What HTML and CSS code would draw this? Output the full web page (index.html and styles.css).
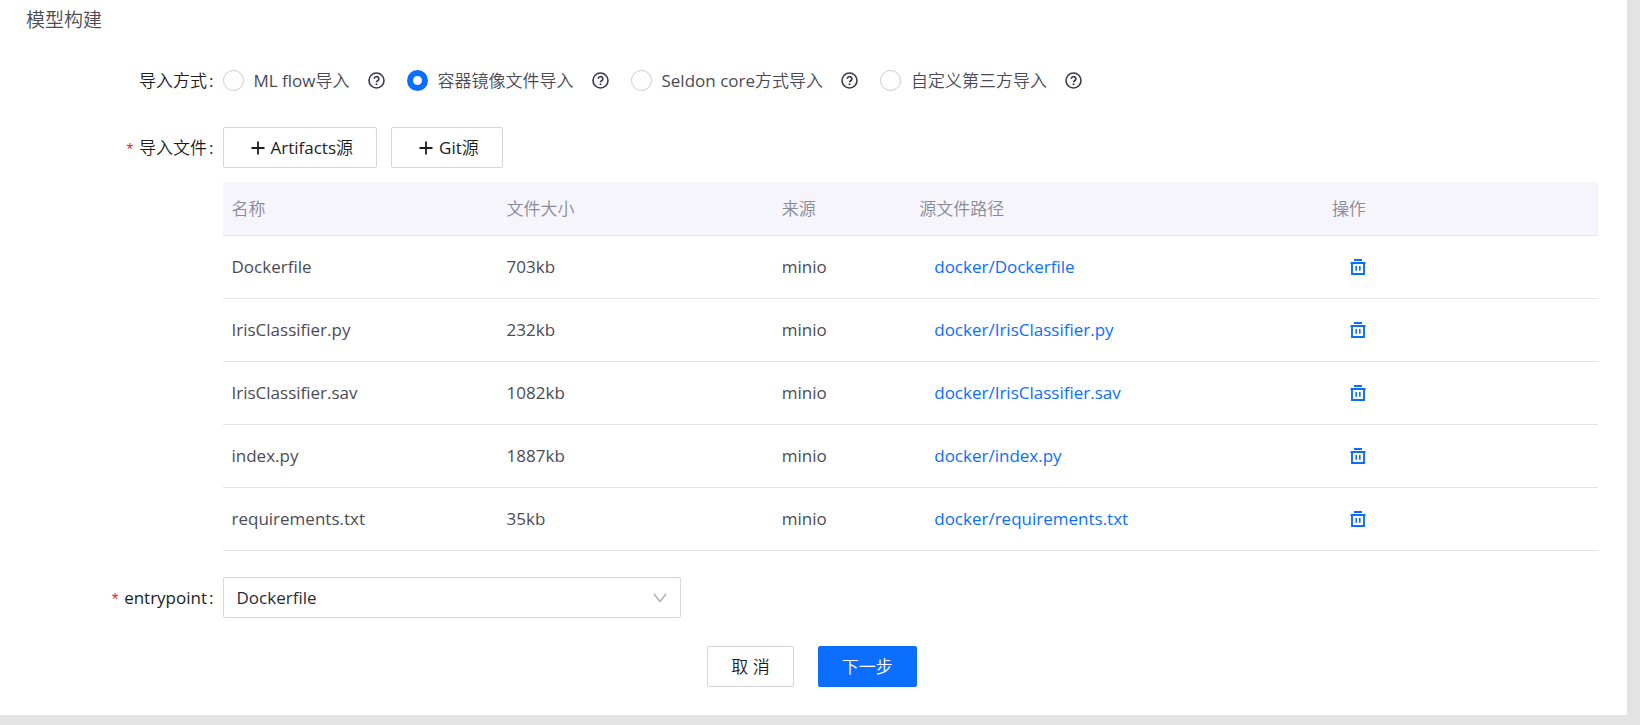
FILE: index.html
```html
<!DOCTYPE html>
<html lang="zh-CN">
<head>
<meta charset="utf-8">
<title>模型构建</title>
<link rel="stylesheet" href="styles.css">
</head>
<body>
<svg class="sprite" aria-hidden="true">
  <symbol id="help" viewBox="0 0 17 17"><circle cx="8.5" cy="8.5" r="7.5" fill="none" stroke="currentColor" stroke-width="1.6"/><path d="M6.2 6.9a2.3 2.2 0 1 1 3.5 1.8c-.8.5-1.2.9-1.2 1.6" fill="none" stroke="currentColor" stroke-width="1.6"/><circle cx="8.5" cy="12.2" r="1" fill="currentColor"/></symbol>
  <symbol id="plus" viewBox="0 0 14 14"><path d="M7 .5v13M.5 7h13" stroke="currentColor" stroke-width="1.8"/></symbol>
  <symbol id="trash" viewBox="0 0 16 16"><path d="M4 1h8M.5 4h15" stroke="currentColor" stroke-width="1.8"/><path d="M2 4v11h12V4" fill="none" stroke="currentColor" stroke-width="1.9"/><path d="M6.2 7v4.8M9.8 7v4.8" stroke="currentColor" stroke-width="1.6"/></symbol>
</svg>
<main class="card">
  <h1 class="title">模型构建</h1>
  <form class="form">
    <div class="item item-mode" role="radiogroup" aria-labelledby="mode-label">
      <span class="label" id="mode-label">导入方式<span class="colon">:</span></span>
      <div class="control modes">
        <div class="mode"><label class="choice"><input class="radio" type="radio" name="mode"><span><span class="latin">ML flow</span>导入</span></label><svg class="help"><use href="#help"/></svg></div>
        <div class="mode"><label class="choice"><input class="radio" type="radio" name="mode" checked>容器镜像文件导入</label><svg class="help"><use href="#help"/></svg></div>
        <div class="mode"><label class="choice"><input class="radio" type="radio" name="mode"><span><span class="latin">Seldon core</span>方式导入</span></label><svg class="help"><use href="#help"/></svg></div>
        <div class="mode"><label class="choice"><input class="radio" type="radio" name="mode">自定义第三方导入</label><svg class="help"><use href="#help"/></svg></div>
      </div>
    </div>
    <div class="item item-files">
      <span class="label"><span class="required">*</span>导入文件<span class="colon">:</span></span>
      <div class="control">
        <div class="sources">
          <button class="btn btn-source" type="button"><svg class="plus"><use href="#plus"/></svg><span><span class="latin">Artifacts</span>源</span></button>
          <button class="btn btn-source" type="button"><svg class="plus"><use href="#plus"/></svg><span><span class="latin">Git</span>源</span></button>
        </div>
        <table class="table">
          <colgroup><col class="col-name"><col class="col-size"><col class="col-origin"><col class="col-path"><col class="col-action"></colgroup>
          <thead><tr><th>名称</th><th>文件大小</th><th>来源</th><th>源文件路径</th><th>操作</th></tr></thead>
          <tbody>
            <tr><td>Dockerfile</td><td>703kb</td><td>minio</td><td><a class="link" href="#">docker/Dockerfile</a></td><td><button class="delete" type="button" aria-label="删除"><svg class="trash"><use href="#trash"/></svg></button></td></tr>
            <tr><td>IrisClassifier.py</td><td>232kb</td><td>minio</td><td><a class="link" href="#">docker/IrisClassifier.py</a></td><td><button class="delete" type="button" aria-label="删除"><svg class="trash"><use href="#trash"/></svg></button></td></tr>
            <tr><td>IrisClassifier.sav</td><td>1082kb</td><td>minio</td><td><a class="link" href="#">docker/IrisClassifier.sav</a></td><td><button class="delete" type="button" aria-label="删除"><svg class="trash"><use href="#trash"/></svg></button></td></tr>
            <tr><td>index.py</td><td>1887kb</td><td>minio</td><td><a class="link" href="#">docker/index.py</a></td><td><button class="delete" type="button" aria-label="删除"><svg class="trash"><use href="#trash"/></svg></button></td></tr>
            <tr><td>requirements.txt</td><td>35kb</td><td>minio</td><td><a class="link" href="#">docker/requirements.txt</a></td><td><button class="delete" type="button" aria-label="删除"><svg class="trash"><use href="#trash"/></svg></button></td></tr>
          </tbody>
        </table>
      </div>
    </div>
    <div class="item item-entry">
      <label class="label" for="entrypoint"><span class="required">*</span><span class="latin">entrypoint</span><span class="colon">:</span></label>
      <div class="control">
        <div class="select-wrap">
          <select class="select" id="entrypoint"><option>Dockerfile</option><option>index.py</option></select>
          <svg class="chevron" viewBox="0 0 14 10"><path d="M1 1l6 7.5L13 1" fill="none" stroke="currentColor" stroke-width="1.4"/></svg>
        </div>
      </div>
    </div>
    <div class="actions">
      <button class="btn" type="button">取 消</button>
      <button class="btn btn-primary" type="submit">下一步</button>
    </div>
  </form>
</main>
</body>
</html>
```

FILE: styles.css
```css
* { box-sizing: border-box; }

body {
  margin: 0;
  padding: 0 13px 10px 0;
  background: #e3e3e3;
  color: #4b4b55;
  font: 350 17px/26px "Open Sans", "Noto Sans CJK SC", sans-serif;
}

button, select { font: inherit; }

.sprite { display: none; }

.latin { font-weight: 400; }

.card {
  padding: 6px 29px 28px 26px;
  background: #fff;
}

.title {
  margin: 0;
  font-size: 19px;
  font-weight: 350;
  line-height: 28px;
}

.form { padding-top: 26px; }

.item { display: flex; }

.label {
  display: flex;
  flex: 0 0 12.5%;
  align-items: center;
  justify-content: flex-end;
  height: 41px;
  padding-right: 9px;
  color: #1c1c22;
}

.colon {
  margin-left: 2px;
  font-weight: 400;
}

.required {
  margin-right: 4px;
  padding-top: 6px;
  color: #f5222d;
  font-family: "Liberation Mono", monospace;
  font-weight: 400;
}

.control {
  flex: 1;
  min-width: 0;
}

.item-mode { margin-bottom: 26px; }
.item-files { margin-bottom: 26px; }
.item-entry { margin-bottom: 28px; }

.modes {
  display: flex;
  flex-wrap: wrap;
  gap: 22px;
}

.mode {
  display: flex;
  align-items: center;
  gap: 18px;
  height: 41px;
}

.choice {
  display: flex;
  align-items: center;
  gap: 10px;
}

.radio {
  width: 21px;
  height: 21px;
  margin: 0;
  appearance: none;
  border: 1px solid #c9c9d6;
  border-radius: 50%;
  background: #fff;
}

.radio:checked { border: 6px solid #0b6eff; }

.help {
  width: 17px;
  height: 17px;
  color: #3b3b46;
}

.sources {
  display: flex;
  gap: 14px;
  margin-bottom: 14px;
}

.btn {
  display: flex;
  align-items: center;
  height: 41px;
  padding: 0 23px;
  border: 1px solid #d6d6e0;
  border-radius: 2px;
  background: #fff;
  color: #1c1c22;
}

.btn-source {
  gap: 6px;
  padding: 0 23px 0 27px;
}

.btn-primary {
  border-color: #0b6eff;
  background: #0b6eff;
  color: #fff;
}

.plus {
  width: 14px;
  height: 14px;
}

.table {
  width: 100%;
  border-collapse: separate;
  border-spacing: 0;
  table-layout: fixed;
}

.col-name, .col-size, .col-action { width: 20%; }
.col-origin { width: 10%; }
.col-path { width: 30%; }

.table th, .table td {
  padding: 0 9px;
  border-bottom: 1px solid #e5e5e9;
  text-align: left;
}

.table th {
  height: 54px;
  background: #f5f5fb;
  color: #8a8a99;
  font-weight: 350;
}

.table th:first-child { border-top-left-radius: 2px; }
.table th:last-child { border-top-right-radius: 2px; }

.table td {
  height: 63px;
  font-weight: 400;
}

.link {
  padding: 0 15px;
  color: #0b6eff;
  text-decoration: none;
}

.delete {
  display: flex;
  padding: 0 18px;
  border: 0;
  background: none;
  color: #0b6eff;
}

.trash {
  width: 16px;
  height: 16px;
}

.select-wrap {
  position: relative;
  width: 33.33%;
}

.select {
  display: block;
  width: 100%;
  height: 41px;
  padding: 0 36px 0 13px;
  appearance: none;
  border: 1px solid #d6d6e0;
  border-radius: 2px;
  background: #fff;
  color: #2b2b35;
  font-weight: 400;
}

.chevron {
  position: absolute;
  top: 16px;
  right: 14px;
  width: 14px;
  height: 10px;
  color: #a9a9b8;
  pointer-events: none;
}

.actions {
  display: flex;
  justify-content: center;
  gap: 24px;
}
```
